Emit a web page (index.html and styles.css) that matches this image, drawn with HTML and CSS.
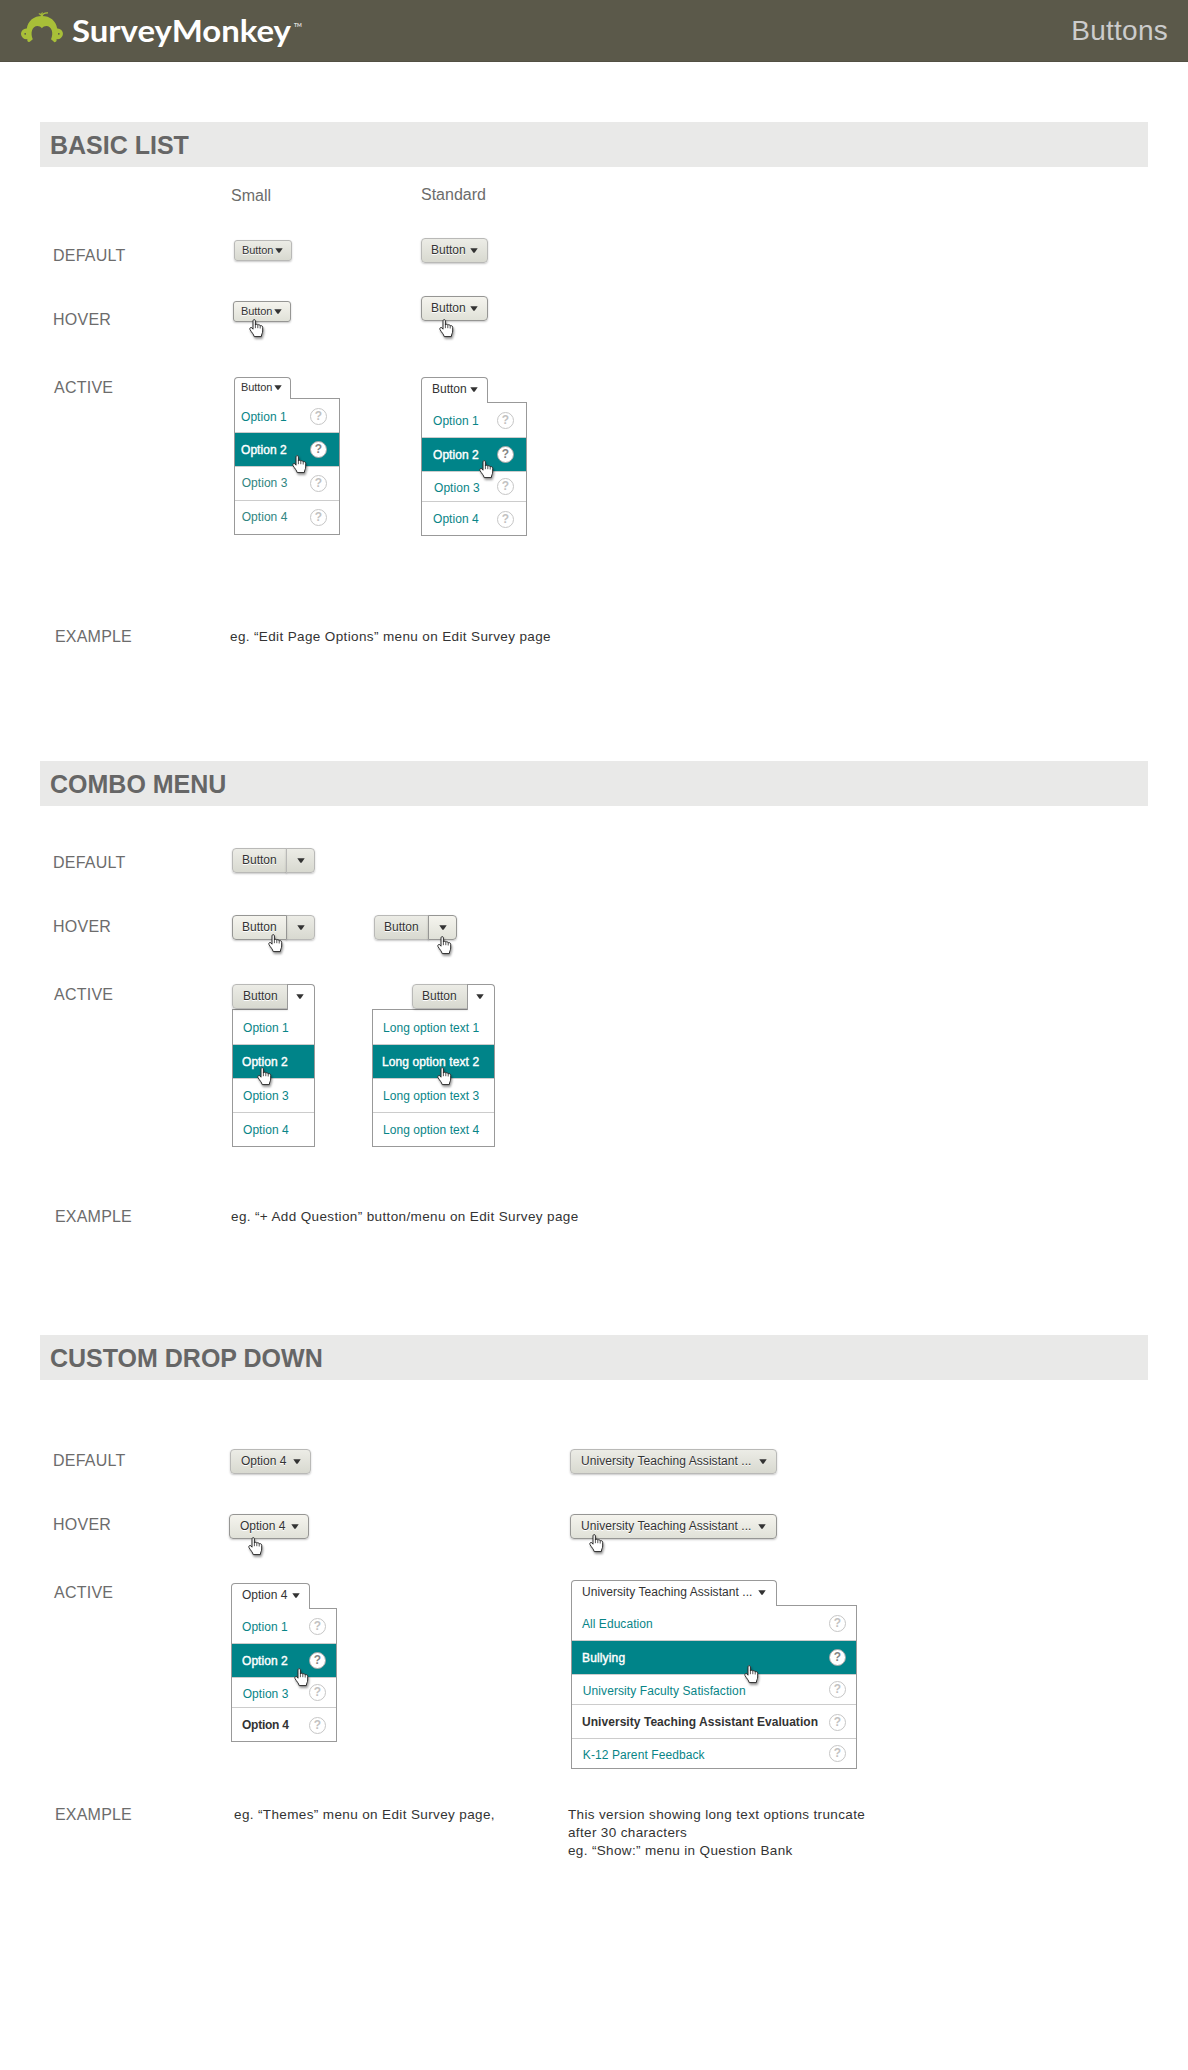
FILE: index.html
```html
<!DOCTYPE html>
<html lang="en">
<head>
<meta charset="utf-8">
<title>SurveyMonkey – Buttons</title>
<link rel="stylesheet" href="styles.css">
</head>
<body>
<svg class="defs" width="0" height="0" aria-hidden="true">
  <symbol id="arrow" viewBox="0 0 8 5"><path d="M0.3 0.2H7.7L4.6 4.8H3.4Z" fill="#333"/></symbol>
  <symbol id="hand" viewBox="0 0 15 19">
    <path d="M4 1.8C4 .2 6.4 .2 6.4 1.8V6C6.8 4.9 8.6 5 8.8 6.2C9.4 5.3 11 5.6 11.2 6.9C12 6.3 13.7 6.8 13.7 8.2V12C13.7 14 12.5 15 12.3 17.6H5.2C4.7 15.3 2.7 13.5 1 10.6C.2 9 1.9 7.8 3 8.9L4 10.2Z" fill="#fff" stroke="#2b2b2b" stroke-width="1" stroke-linejoin="round"/>
    <path d="M6.4 5.5V9.2M8.8 6.2V9.2M11.2 6.9V9.5" fill="none" stroke="#2b2b2b" stroke-width=".8"/>
  </symbol>
</svg>

<header class="header">
  <div class="logo">
    <svg class="monkey" width="44" height="31" viewBox="0 0 44 31" aria-hidden="true">
      <path fill="#a8bf38" fill-rule="evenodd" d="M6.8 16.4C8 8.8 13.8 4 21.9 4S36 8.8 37.2 16.4A5.4 5.4 0 1 1 36.6 27.1V28.6A1.7 1.7 0 0 1 33.4 29.2L31 27.2C32.3 24.3 32.6 21.2 31.8 18.6C30.6 13.4 24.800 12.500 21.900 16.200C19 12.500 13.200 13.400 12 18.600C11.200 21.200 11.500 24.300 12.800 27.200L10.400 29.200A1.700 1.700 0 0 1 7.300 28.600V27.100A5.400 5.400 0 1 1 6.800 16.400ZM5.200 20.900A.9 .9 0 1 0 5.200 22.700A.9 .9 0 1 0 5.200 20.900ZM38.800 20.900A.9 .9 0 1 0 38.800 22.700A.9 .9 0 1 0 38.800 20.900Z"/>
      <path fill="none" stroke="#a8bf38" stroke-width="1.200" d="M21.800 5C21.500 3 20.500 1.500 18.800 2M22 4.500C22.500 2 24.500 .7 28 .9M21 3L22.500 .5"/>
    </svg>
    <svg class="wordmark" width="236" height="40" viewBox="0 0 236 40">
      <text class="wordmark-name" x="0" y="30" textLength="219" lengthAdjust="spacingAndGlyphs">SurveyMonkey</text>
      <text class="wordmark-tm" x="222" y="15">TM</text>
    </svg>
  </div>
  <div class="header-title">Buttons</div>
</header>

<section class="section basic">
  <h2>BASIC LIST</h2>
  <div class="board">
    <span></span>
    <div class="size-name size-small">Small</div>
    <div class="size-name size-standard">Standard</div>

    <h3>DEFAULT</h3>
    <div class="cell"><button class="btn small at-small">Button<svg class="arrow"><use href="#arrow"/></svg></button></div>
    <div class="cell"><button class="btn at-standard">Button<svg class="arrow"><use href="#arrow"/></svg></button></div>

    <h3>HOVER</h3>
    <div class="cell"><button class="btn small hover at-small">Button<svg class="arrow"><use href="#arrow"/></svg></button><svg class="hand"><use href="#hand"/></svg></div>
    <div class="cell"><button class="btn hover at-standard">Button<svg class="arrow"><use href="#arrow"/></svg></button><svg class="hand"><use href="#hand"/></svg></div>

    <h3 class="active-label">ACTIVE</h3>
    <div class="cell menu menu-small">
      <div class="tab small">Button<svg class="arrow"><use href="#arrow"/></svg></div>
      <ul>
        <li>Option 1<i>?</i></li>
        <li class="selected">Option 2<i>?</i></li>
        <li class="muted">Option 3<i>?</i></li>
        <li class="muted">Option 4<i>?</i></li>
      </ul>
      <svg class="hand"><use href="#hand"/></svg>
    </div>
    <div class="cell menu menu-standard">
      <div class="tab">Button<svg class="arrow"><use href="#arrow"/></svg></div>
      <ul>
        <li>Option 1<i>?</i></li>
        <li class="selected">Option 2<i>?</i></li>
        <li class="nudged">Option 3<i>?</i></li>
        <li>Option 4<i>?</i></li>
      </ul>
      <svg class="hand"><use href="#hand"/></svg>
    </div>

    <h3 class="example-label">EXAMPLE</h3>
    <p>eg. “Edit Page Options” menu on Edit Survey page</p>
  </div>
</section>

<section class="section combo">
  <h2>COMBO MENU</h2>
  <div class="board">
    <h3>DEFAULT</h3>
    <div class="cell"><div class="split"><button class="btn">Button</button><button class="btn more"><svg class="arrow"><use href="#arrow"/></svg></button></div></div>
    <span></span>

    <h3>HOVER</h3>
    <div class="cell"><div class="split"><button class="btn hover">Button</button><button class="btn more"><svg class="arrow"><use href="#arrow"/></svg></button></div><svg class="hand"><use href="#hand"/></svg></div>
    <div class="cell"><div class="split"><button class="btn">Button</button><button class="btn more hover"><svg class="arrow"><use href="#arrow"/></svg></button></div><svg class="hand"><use href="#hand"/></svg></div>

    <h3 class="active-label">ACTIVE</h3>
    <div class="cell menu menu-combo">
      <div class="split-open"><button class="btn">Button</button><div class="tab"><svg class="arrow"><use href="#arrow"/></svg></div></div>
      <ul>
        <li>Option 1</li>
        <li class="selected">Option 2</li>
        <li>Option 3</li>
        <li>Option 4</li>
      </ul>
      <svg class="hand"><use href="#hand"/></svg>
    </div>
    <div class="cell menu menu-combo menu-combo-long">
      <div class="split-open"><button class="btn">Button</button><div class="tab"><svg class="arrow"><use href="#arrow"/></svg></div></div>
      <ul>
        <li>Long option text 1</li>
        <li class="selected">Long option text 2</li>
        <li>Long option text 3</li>
        <li>Long option text 4</li>
      </ul>
      <svg class="hand"><use href="#hand"/></svg>
    </div>

    <h3 class="example-label">EXAMPLE</h3>
    <p>eg. “+ Add Question” button/menu on Edit Survey page</p>
  </div>
</section>

<section class="section custom">
  <h2>CUSTOM DROP DOWN</h2>
  <div class="board">
    <h3>DEFAULT</h3>
    <div class="cell"><button class="btn option">Option 4<svg class="arrow"><use href="#arrow"/></svg></button></div>
    <div class="cell"><button class="btn long">University Teaching Assistant ...<svg class="arrow"><use href="#arrow"/></svg></button></div>

    <h3>HOVER</h3>
    <div class="cell"><button class="btn option hover">Option 4<svg class="arrow"><use href="#arrow"/></svg></button><svg class="hand"><use href="#hand"/></svg></div>
    <div class="cell"><button class="btn long hover">University Teaching Assistant ...<svg class="arrow"><use href="#arrow"/></svg></button><svg class="hand"><use href="#hand"/></svg></div>

    <h3 class="active-label">ACTIVE</h3>
    <div class="cell menu menu-option">
      <div class="tab">Option 4<svg class="arrow"><use href="#arrow"/></svg></div>
      <ul>
        <li>Option 1<i>?</i></li>
        <li class="selected">Option 2<i>?</i></li>
        <li class="nudged">Option 3<i>?</i></li>
        <li class="current">Option 4<i>?</i></li>
      </ul>
      <svg class="hand"><use href="#hand"/></svg>
    </div>
    <div class="cell menu menu-long">
      <div class="tab">University Teaching Assistant ...<svg class="arrow"><use href="#arrow"/></svg></div>
      <ul>
        <li>All Education<i>?</i></li>
        <li class="selected">Bullying<i>?</i></li>
        <li class="nudged">University Faculty Satisfaction<i>?</i></li>
        <li class="current">University Teaching Assistant Evaluation<i>?</i></li>
        <li class="nudged">K-12 Parent Feedback<i>?</i></li>
      </ul>
      <svg class="hand"><use href="#hand"/></svg>
    </div>

    <h3 class="example-label">EXAMPLE</h3>
    <p class="note-themes">eg. “Themes” menu on Edit Survey page,</p>
    <p class="note-long">This version showing long text options truncate<br>after 30 characters<br>eg. “Show:” menu in Question Bank</p>
  </div>
</section>
</body>
</html>
```
FILE: styles.css
```css
* { box-sizing: border-box; }

body {
  margin: 0;
  width: 1188px;
  height: 2070px;
  background: #fff;
  font-family: "Liberation Sans", Arial, sans-serif;
  color: #333;
}

.defs { display: none; }

/* Header */
.header {
  display: flex;
  justify-content: space-between;
  height: 62px;
  padding: 0 20px;
  background: #5b594a;
  border-bottom: 1px solid #525043;
}
.logo { display: flex; align-items: flex-start; }
.monkey { margin-top: 12px; }
.wordmark { margin: 12px 0 0 8px; }
.wordmark-name { font: 700 30px Lato, sans-serif; fill: #fff; }
.wordmark-tm { font: 700 5px Lato, sans-serif; fill: #e8e8e4; }
.header-title {
  margin-top: 15px;
  font-size: 28px;
  line-height: 32px;
  letter-spacing: .25px;
  color: #ccc;
}

/* Sections */
.section { margin: 0; }
.basic { padding-top: 60px; height: 699px; }
.combo { height: 574px; }
.section h2 {
  margin: 0 40px;
  height: 45px;
  padding: 0 10px;
  font-size: 25px;
  line-height: 46px;
  color: #666;
  background: #e9e9e8;
}

.board { display: grid; }
.basic .board { grid-template: 63px 60px 70px 250px 100px / 220px 190px 1fr; }
.combo .board { grid-template: 94px 70px 230px 100px / 220px 140px 1fr; }
.custom .board { grid-template: 120px 70px 230px 100px / 220px 340px 1fr; }

.board h3, .size-name {
  margin: 0;
  font-size: 16px;
  font-weight: 400;
  line-height: 18px;
  color: #6c6c6c;
}
.board h3 { padding: 17px 0 0 53px; letter-spacing: .25px; }
.board h3.active-label { padding-left: 54px; }
.board h3.example-label { padding-left: 55px; letter-spacing: .2px; }
.basic h3:nth-of-type(2) { padding-top: 21px; }
.basic h3:nth-of-type(3) { padding-top: 19px; }
.basic h3:nth-of-type(4) { padding-top: 18px; }
.combo h3:nth-of-type(1) { padding-top: 48px; }
.combo h3:nth-of-type(2) { padding-top: 18px; }
.combo h3:nth-of-type(3) { padding-top: 16px; }
.combo h3:nth-of-type(4) { padding-top: 8px; }
.custom h3:nth-of-type(1) { padding-top: 72px; }
.custom h3:nth-of-type(2) { padding-top: 16px; }
.custom h3:nth-of-type(3) { padding-top: 14px; }
.custom h3:nth-of-type(4) { padding-top: 6px; }

.size-small { padding: 20px 0 0 11px; }
.size-standard { padding: 19px 0 0 11px; }

.board p {
  grid-column: 2 / -1;
  margin: 0;
  padding: 18px 0 0 10px;
  font-size: 13.5px;
  line-height: 18px;
  letter-spacing: .37px;
}
.combo .board p { padding: 8px 0 0 11px; }
.custom .board p { grid-column: auto; padding: 6px 0 0; white-space: nowrap; }
.custom .board .note-themes { padding-left: 14px; }
.custom .board .note-long { padding-left: 8px; letter-spacing: .35px; }

/* Buttons */
.cell { position: relative; justify-self: start; align-self: start; }

.btn, .tab {
  display: flex;
  align-items: flex-start;
  width: 67px;
  height: 25px;
  margin: 0;
  padding: 4px 9px 0;
  border: 1px solid #b9b9b7;
  border-radius: 4px;
  font: 12px/14px "Liberation Sans", Arial, sans-serif;
  color: #333;
  white-space: nowrap;
}
.btn {
  background: linear-gradient(#ecece6, #d8d9d0);
  box-shadow: 0 1px 2px rgba(0, 0, 0, .22);
  text-shadow: 0 1px 0 #fff;
}
.btn.hover {
  background: linear-gradient(#f5f4ee, #e0e1d8);
  border-color: #969694;
}
.small {
  width: 58px;
  height: 21px;
  padding: 3px 8px 0 7px;
  border-radius: 3px;
  font-size: 11px;
  line-height: 13px;
  letter-spacing: -.1px;
}
.arrow { flex: none; width: 8px; height: 5px; margin: 5px 0 0 auto; }
.small .arrow { margin-top: 4px; }

.hand {
  position: absolute;
  z-index: 3;
  width: 15px;
  height: 19px;
  filter: drop-shadow(1px 2px 1px rgba(0, 0, 0, .4));
}

.basic .at-small { margin: 10px 0 0 14px; }
.basic .at-standard { margin: 8px 0 0 11px; }
.basic .at-small.hover { margin: 11px 0 0 13px; }
.basic .at-standard.hover { margin: 6px 0 0 11px; }
.basic .hover + .hand { left: 29px; top: 29px; }

.split { display: flex; width: 83px; margin: 42px 0 0 12px; }
.split .btn:first-child { width: 55px; border-radius: 4px 0 0 4px; }
.split .more { width: 29px; margin-left: -1px; border-radius: 0 4px 4px 0; }
.split .hover { position: relative; z-index: 1; }
.cell:has(.hover) .split { margin-top: 15px; }
.combo .split:has(.more.hover) { margin-left: 14px; }
.combo .split + .hand { left: 48px; top: 34px; }
.combo .split:has(.more.hover) + .hand { left: 77px; top: 36px; }

.btn.option { width: 81px; margin: 69px 0 0 10px; padding-left: 10px; }
.btn.long { width: 207px; margin: 69px 0 0 10px; padding-left: 10px; letter-spacing: .06px; }
.btn.option.hover { width: 80px; margin: 14px 0 0 9px; }
.btn.long.hover { margin-top: 14px; padding-right: 10px; }
.custom .option + .hand { left: 28px; top: 37px; }
.custom .long + .hand { left: 29px; top: 34px; }

/* Open menus */
.tab {
  position: relative;
  z-index: 1;
  height: 26px;
  margin-bottom: -1px;
  padding-left: 10px;
  background: #fff;
  border-color: #999;
  border-bottom: 0;
  border-radius: 4px 4px 0 0;
}
.tab.small { width: 57px; height: 22px; padding-left: 6px; }

.menu ul {
  margin: 0;
  padding: 0;
  list-style: none;
  border: 1px solid #999;
  background: #fff;
}
.menu li {
  display: flex;
  justify-content: space-between;
  height: 34px;
  padding: 10px 12px 0 10px;
  border-bottom: 1px solid #ccc;
  font-size: 12px;
  line-height: 14px;
  letter-spacing: .05px;
  color: #088587;
  white-space: nowrap;
}
.menu li:nth-child(1) { height: 35px; padding-top: 11px; }
.menu li:last-child { height: 33px; border-bottom: 0; }
.menu li.selected {
  color: #fff;
  background: #008489;
  -webkit-text-stroke: .4px #fff;
}
.menu li.current { font-weight: 700; color: #333; }
.menu li.muted { color: #2f8580; }

.menu i {
  flex: none;
  width: 17px;
  height: 17px;
  margin-top: -2px;
  border: 1px solid #c6c6c6;
  border-radius: 50%;
  font: 700 12px/15px "Liberation Sans", Arial, sans-serif;
  letter-spacing: 0;
  text-align: center;
  color: #c2c2c2;
  background: #fff;
  -webkit-text-stroke: 0;
}
.menu .selected i { border-color: #a5a5a5; color: #858585; }

.menu-small { width: 106px; margin: 17px 0 0 14px; }
.menu-small li { padding-left: 6px; }
.menu-small li:nth-child(1) { height: 34px; }
.menu-small li.muted { padding-top: 9px; padding-left: 6.7px; }
.menu-small .muted i { margin-top: -1px; }
.menu-small .hand { left: 58px; top: 78px; }

.menu-standard { width: 106px; margin: 17px 0 0 11px; }
.menu-standard li { padding-left: 11px; }
.menu li.nudged { height: 30px; padding-top: 9px; }
.menu .nudged i { margin-top: -3px; }
.menu-standard li.nudged { padding-left: 12px; }
.menu-standard li:last-child i, .menu .current i { margin-top: -1px; }
.menu-standard .hand { left: 58px; top: 83px; }

.menu-combo { width: 83px; margin: 14px 0 0 12px; }
.menu-combo li { padding-left: 10px; }
.menu-combo li.selected { padding-left: 9px; }
.split-open { display: flex; justify-content: flex-end; }
.split-open .btn { width: 56px; padding-left: 10px; border-radius: 4px 0 0 4px; }
.split-open .tab { width: 28px; margin-left: -1px; padding: 4px 10px 0 0; border-radius: 0 4px 0 0; }
.menu-combo .hand { left: 25px; top: 83px; }
.menu-combo-long { width: 123px; }
.menu-combo-long .btn { padding-left: 9px; }
.menu-combo-long .selected { letter-spacing: .1px; }
.menu-combo-long .hand { left: 65px; }

.menu-option { width: 106px; margin: 13px 0 0 11px; }
.menu-option .tab { width: 79px; }
.menu-option li, .menu-long li { padding-right: 10px; }
.menu-option li.nudged { padding-left: 10.7px; }
.menu-option li.current { letter-spacing: -.25px; }
.menu-option .hand { left: 63px; top: 85px; }

.menu-long { width: 286px; margin: 10px 0 0 11px; }
.menu-long .tab { width: 206px; padding-right: 10px; letter-spacing: .06px; }
.menu-long li.selected { letter-spacing: .15px; }
.menu-long li.current { height: 34px; }
.menu-long li.nudged { padding-left: 10.8px; letter-spacing: .09px; }
.menu-long li.nudged:last-child { height: 29px; }
.menu-long .hand { left: 173px; top: 85px; }
```
